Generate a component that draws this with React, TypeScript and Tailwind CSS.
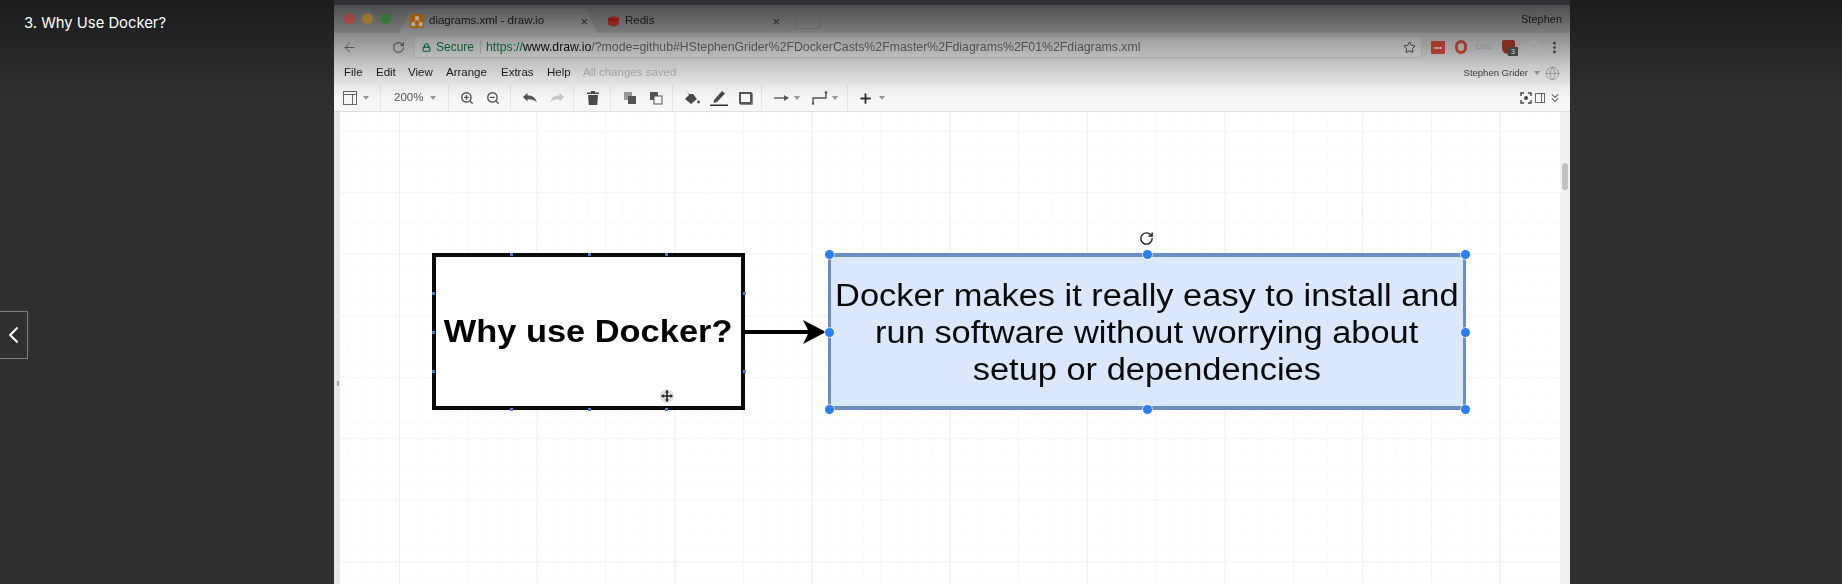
import { ChevronLeft, ChevronsDown, Lock, RotateCw, Star, ArrowLeft, ArrowRight, Globe, ZoomIn, ZoomOut, Plus, MoreVertical } from 'lucide-react';

const menus = [
  { label: 'File', cls: 'w-[32px]' },
  { label: 'Edit', cls: 'w-[32px]' },
  { label: 'View', cls: 'w-[38px]' },
  { label: 'Arrange', cls: 'w-[55px]' },
  { label: 'Extras', cls: 'w-[46px]' },
  { label: 'Help', cls: 'w-[36px]' },
];

function Caret() {
  return <span className="w-0 h-0 border-x-[3.5px] border-x-transparent border-t-[4px] border-t-[#9a9a9a]" />;
}

function Light({ color }: { color: string }) {
  return <span className={`w-[11px] h-[11px] rounded-full ${color}`} />;
}

function Handle({ pos }: { pos: string }) {
  return <span className={`absolute w-[9px] h-[9px] -ml-[4.5px] -mt-[4.5px] rounded-full bg-[#2b7ef5] ring-1 ring-white/60 ${pos}`} />;
}

function Tick({ pos }: { pos: string }) {
  return <span className={`absolute w-[3px] h-[3px] -ml-[1.5px] -mt-[1.5px] bg-[#4a7fd0] ${pos}`} />;
}

export default function App() {
  return (
    <div className="relative flex w-[1842px] h-[584px] overflow-hidden bg-[#2e2f31] font-['Liberation_Sans',sans-serif]">
      <div className="w-[334px] shrink-0" />

      <div className="w-[1236px] h-[594px] shrink-0 flex flex-col bg-white blur-[0.55px]">
        <div className="h-[5px] bg-[#4c4e52]" />

        {/* tab strip */}
        <div className="h-[28px] flex items-end bg-[linear-gradient(#7c7e81,#a9abad)] pl-[10px] pr-[8px]">
          <div className="flex items-center gap-[7px] self-center w-[56px] pb-[2px]">
            <Light color="bg-[#ec6a62]" />
            <Light color="bg-[#e0b040]" />
            <Light color="bg-[#4fae4c]" />
          </div>
          <div className="h-[24px] w-[197px] flex items-center pl-[10px] pr-[9px] bg-[linear-gradient(#8b8d90,#bcbdbf)] [clip-path:polygon(10px_0,187px_0,197px_100%,0_100%)]">
            <svg viewBox="0 0 14 14" className="w-[14px] h-[14px] mr-[5px] shrink-0">
              <rect width="14" height="14" rx="1.5" fill="#f08705" />
              <path d="M5.5 2.5h3v3h-3zM1.8 8.8h3v3h-3zM9.2 8.8h3v3h-3zM7 5.5 3.3 8.8M7 5.5l3.7 3.3" fill="#fff" stroke="#fff" strokeWidth="0.7" />
            </svg>
            <span className="text-[11.5px] text-[#222]">diagrams.xml - draw.io</span>
            <span className="ml-auto text-[13px] leading-none text-[#333]">×</span>
          </div>
          <div className="h-[24px] w-[197px] flex items-center pl-[12px] pr-[12px] -ml-[2px]">
            <svg viewBox="0 0 14 14" className="w-[13px] h-[13px] mr-[5px] shrink-0">
              <path d="M7 1 13 3.5V10L7 13 1 10V3.5z" fill="#d0312b" />
              <path d="M1 3.5 7 6 13 3.5" fill="none" stroke="#7a1c18" strokeWidth="0.8" />
            </svg>
            <span className="text-[11.5px] text-[#222]">Redis</span>
            <span className="ml-auto text-[13px] leading-none text-[#333]">×</span>
          </div>
          <div className="h-[13px] w-[26px] self-center mt-[6px] ml-[3px] border border-[#8d8f91] rounded-[2px] -skew-x-12" />
          <span className="ml-auto self-center text-[11px] text-[#1a1a1a]">Stephen</span>
        </div>

        {/* address bar */}
        <div className="h-[28px] flex items-center bg-[linear-gradient(#bcbdbf,#dedfe0)] pl-[8px] pr-[7px] text-[#666]">
          <ArrowLeft size={15} strokeWidth={1.6} />
          <ArrowRight size={15} strokeWidth={1.6} className="ml-[13px] text-[#cfcfcf]" />
          <RotateCw size={13} strokeWidth={2} className="ml-[7px]" />
          <div className="ml-[9px] w-[1008px] h-[21px] flex items-center pl-[7px] pr-[5px] bg-white/25 border border-[#c8c9ca] rounded-[3px]">
            <Lock size={9} strokeWidth={3} className="text-[#0b7a3e]" />
            <span className="ml-[5px] text-[12px] text-[#0b7a3e]">Secure</span>
            <span className="ml-[6px] w-px h-[14px] bg-[#b8b9ba]" />
            <span className="ml-[5px] text-[12.3px] whitespace-nowrap text-[#666]">
              <span className="text-[#0b7a3e]">https://</span>
              <span className="text-[#111]">www.draw.io</span>
              /?mode=github#HStephenGrider%2FDockerCasts%2Fmaster%2Fdiagrams%2F01%2Fdiagrams.xml
            </span>
            <Star size={13} strokeWidth={1.8} className="ml-auto text-[#444]" />
          </div>
          <span className="ml-[9px] w-[14px] h-[13px] flex items-center justify-center rounded-[1px] bg-[#d84a38] text-[7px] leading-none text-white">•••</span>
          <span className="ml-[10px] w-[12px] h-[14px] rounded-full border-[3px] border-[#d14a32]" />
          <span className="ml-[9px] w-[18px] text-[7.5px] text-[#aaa]">CSS</span>
          <span className="relative ml-[8px] w-[13px] h-[14px] rounded-b-[6px] rounded-t-[2px] bg-[#a8392b]">
            <span className="absolute left-[6px] top-[7px] w-[10px] h-[9px] flex items-center justify-center bg-[#555] text-[7px] leading-none text-white">3</span>
          </span>
          <span className="ml-[14px] w-[11px] h-[12px] rounded-full border-2 border-[#d4d4d4]" />
          <MoreVertical size={15} strokeWidth={2.4} className="ml-[7px] text-[#444]" />
        </div>

        {/* menu bar */}
        <div className="h-[24px] flex items-center bg-[linear-gradient(#e4e4e4,#f4f4f4)] pl-[10px] pr-[10px] text-[11.5px] text-[#222]">
          {menus.map((m) => (
            <span key={m.label} className={m.cls}>{m.label}</span>
          ))}
          <span className="text-[#b5b5b5]">All changes saved</span>
          <span className="ml-auto text-[9.5px] text-[#444]">Stephen Grider</span>
          <span className="ml-[6px] flex"><Caret /></span>
          <Globe size={15} strokeWidth={1} className="ml-[5px] text-[#888]" />
        </div>

        {/* toolbar */}
        <div className="h-[27px] flex items-stretch bg-[#f7f7f7] border-b border-[#dedede] text-[#555]">
          <div className="w-[47px] flex items-center gap-[6px] pl-[9px] border-r border-[#e6e6e6]">
            <span className="relative w-[14px] h-[14px] border border-[#666]">
              <span className="absolute left-0 right-0 top-[2px] h-px bg-[#666]" />
              <span className="absolute right-[3px] top-[2px] bottom-0 w-px bg-[#666]" />
            </span>
            <Caret />
          </div>
          <div className="w-[68px] flex items-center gap-[7px] pl-[13px] border-r border-[#e6e6e6] text-[11.5px]">
            200% <Caret />
          </div>
          <div className="w-[62px] flex items-center gap-[12px] pl-[11px] border-r border-[#e6e6e6]">
            <ZoomIn size={14} strokeWidth={2.4} />
            <ZoomOut size={14} strokeWidth={2.4} />
          </div>
          <div className="w-[63px] flex items-center gap-[13px] pl-[12px] border-r border-[#e6e6e6]">
            <svg viewBox="0 0 14 10" className="w-[14px] h-[10px]">
              <path d="M0 4 4.5 0v2.4C9.5 2.2 12.6 4.4 14 9.5 11.8 6.9 8.6 6 4.5 6.2V8.5z" fill="#555" />
            </svg>
            <svg viewBox="0 0 14 10" className="w-[14px] h-[10px]">
              <path d="M14 4 9.5 0v2.4C4.5 2.2 1.4 4.4 0 9.5 2.2 6.9 5.4 6 9.5 6.2V8.5z" fill="#c8c8c8" />
            </svg>
          </div>
          <div className="w-[37px] flex items-center justify-center pl-[2px] border-r border-[#e6e6e6]">
            <svg viewBox="0 0 12 14" className="w-[12px] h-[14px]">
              <path d="M0 1.5h4V0h4v1.5h4V3H0zM1 4h10l-.8 10H1.8z" fill="#4a4a4a" />
            </svg>
          </div>
          <div className="w-[62px] flex items-center gap-[12px] pl-[12px] border-r border-[#e6e6e6]">
            <svg viewBox="0 0 14 14" className="w-[14px] h-[14px]">
              <rect x="1" y="1" width="8" height="8" fill="#999" />
              <rect x="5" y="5" width="8" height="8" fill="#555" />
            </svg>
            <svg viewBox="0 0 14 14" className="w-[14px] h-[14px]">
              <rect x="1" y="1" width="8" height="8" fill="#555" />
              <rect x="5" y="5" width="8" height="8" fill="#f7f7f7" stroke="#555" />
            </svg>
          </div>
          <div className="w-[89px] flex items-center gap-[10px] pl-[11px] border-r border-[#e6e6e6]">
            <svg viewBox="0 0 16 14" className="w-[16px] h-[14px]">
              <path d="M3 0 5 3 9 3 13 8 7 13 1 8 5 4z" fill="#4a4a4a" />
              <circle cx="14.5" cy="11" r="1.4" fill="#4a4a4a" />
            </svg>
            <svg viewBox="0 0 18 16" className="w-[18px] h-[16px]">
              <path d="M4 10 12 1l3 2.5L7 12 3.5 13z" fill="#4a4a4a" />
              <rect y="14.5" width="18" height="1.5" fill="#333" />
            </svg>
            <span className="w-[13px] h-[12px] border-2 border-[#555] rounded-[1px] ml-[1px] shadow-[1px_1px_0_#888]" />
          </div>
          <div className="w-[86px] flex items-center gap-[4px] pl-[12px] border-r border-[#e6e6e6]">
            <svg viewBox="0 0 16 8" className="w-[16px] h-[8px]">
              <path d="M0 4h11" stroke="#555" strokeWidth="1.4" />
              <path d="M10 1l5 3-5 3z" fill="#555" />
            </svg>
            <Caret />
            <svg viewBox="0 0 16 14" className="w-[16px] h-[14px] ml-[8px]">
              <path d="M1 13V7h13V2" fill="none" stroke="#555" strokeWidth="1.4" />
              <circle cx="1" cy="12.5" r="1.3" fill="#555" />
              <circle cx="14" cy="1.5" r="1.3" fill="#555" />
            </svg>
            <Caret />
          </div>
          <div className="flex items-center gap-[6px] pl-[10px]">
            <Plus size={15} strokeWidth={3} className="text-[#333]" />
            <Caret />
          </div>
          <div className="ml-auto flex items-center gap-[3px] pr-[8px]">
            <svg viewBox="0 0 12 12" className="w-[12px] h-[12px]">
              <path d="M1 4V1h3M8 1h3v3M11 8v3H8M4 11H1V8" fill="none" stroke="#444" strokeWidth="1.4" />
              <circle cx="6" cy="6" r="2" fill="#444" />
            </svg>
            <span className="relative w-[10px] h-[10px] border border-[#666]">
              <span className="absolute right-[2px] top-0 bottom-0 w-px bg-[#666]" />
            </span>
            <ChevronsDown size={14} strokeWidth={1.8} />
          </div>
        </div>

        {/* drawing area */}
        <div className="flex-1 flex">
          <div className="relative w-[6px] bg-[#e8e8e8]">
            <span className="absolute left-[3px] top-[269px] w-[2px] h-[5px] bg-[#aaa]" />
          </div>
          <div className="relative flex-1 bg-white bg-[linear-gradient(#f3f3f3_1px,transparent_1px),linear-gradient(90deg,#efefef_1px,transparent_1px),linear-gradient(90deg,#f5f5f5_1px,transparent_1px),linear-gradient(#fbfbfb_1px,transparent_1px),linear-gradient(90deg,#fafafa_1px,transparent_1px)] bg-[size:100%_61.5px,137.6px_100%,68.8px_100%,100%_15.4px,17.2px_100%] bg-[position:0_18.7px,59px_0,59px_0,0_3.3px,7.4px_0]">
            <div className="absolute left-[92px] top-[141px] w-[313px] h-[157px] flex items-center justify-center pt-[2px] bg-white border-4 border-[#0a0a0a]">
              <span className="text-[31px] font-bold text-black whitespace-nowrap scale-x-[1.11]">Why use Docker?</span>
            </div>
            <Tick pos="left-[171px] top-[142px]" />
            <Tick pos="left-[249px] top-[142px]" />
            <Tick pos="left-[326px] top-[142px]" />
            <Tick pos="left-[171px] top-[297px]" />
            <Tick pos="left-[249px] top-[297px]" />
            <Tick pos="left-[326px] top-[297px]" />
            <Tick pos="left-[93px] top-[181px]" />
            <Tick pos="left-[93px] top-[220px]" />
            <Tick pos="left-[93px] top-[259px]" />
            <Tick pos="left-[404px] top-[181px]" />
            <Tick pos="left-[404px] top-[259px]" />

            <span className="absolute left-[320px] top-[277px] w-[14px] h-[14px] rounded-full bg-[#cfcfcf]/60" />
            <svg viewBox="0 0 14 14" className="absolute left-[321px] top-[278px] w-[12px] h-[12px]">
              <path d="M7 1v12M1 7h12" stroke="#222" strokeWidth="1.8" />
              <path d="M7 0l2.4 3H4.6zM7 14l2.4-3H4.6zM0 7l3-2.4v4.8zM14 7l-3-2.4v4.8z" fill="#222" />
            </svg>

            <svg viewBox="0 0 86 30" className="absolute left-[404px] top-[205px] w-[86px] h-[30px]">
              <path d="M0 15h70" stroke="#000" strokeWidth="4" />
              <path d="M59 3 82 15 59 27 65 15z" fill="#000" />
            </svg>

            <RotateCw size={15} strokeWidth={2.2} className="absolute left-[799px] top-[119px] text-[#222]" />

            <div className="absolute left-[488px] top-[141px] w-[638px] h-[157px] flex flex-col items-center justify-center pt-[2px] bg-[#dae7fc] border-y-4 border-x-[3px] border-[#6c8ebf] text-[31px] leading-[37px] text-[#0a0a0a] whitespace-nowrap">
              <span className="scale-x-[1.11]">Docker makes it really easy to install and</span>
              <span className="scale-x-[1.11]">run software without worrying about</span>
              <span className="scale-x-[1.11]">setup or dependencies</span>
            </div>
            <Handle pos="left-[489px] top-[142px]" />
            <Handle pos="left-[807px] top-[142px]" />
            <Handle pos="left-[1125px] top-[142px]" />
            <Handle pos="left-[489px] top-[220px]" />
            <Handle pos="left-[1125px] top-[220px]" />
            <Handle pos="left-[489px] top-[297px]" />
            <Handle pos="left-[807px] top-[297px]" />
            <Handle pos="left-[1125px] top-[297px]" />
          </div>
          <div className="relative w-[10px] bg-[#f1f1f1]">
            <span className="absolute left-[2px] top-[51px] w-[6px] h-[27px] rounded-[3px] bg-[#c0c0c0]" />
          </div>
        </div>
      </div>

      <div className="flex-1" />

      {/* player overlay */}
      <div className="absolute inset-x-0 top-0 h-[100px] bg-gradient-to-b from-black/40 to-transparent" />
      <div className="absolute left-[24px] top-[14px] text-[14.8px] leading-[18px] text-white font-['Inter',sans-serif]">
        3. Why Use Docker?
      </div>
      <button className="absolute left-0 top-[311px] w-[28px] h-[48px] flex items-center justify-center bg-[#2e2f31] border border-l-0 border-[#7d7d7d] text-white">
        <ChevronLeft size={30} strokeWidth={2} />
      </button>
    </div>
  );
}
